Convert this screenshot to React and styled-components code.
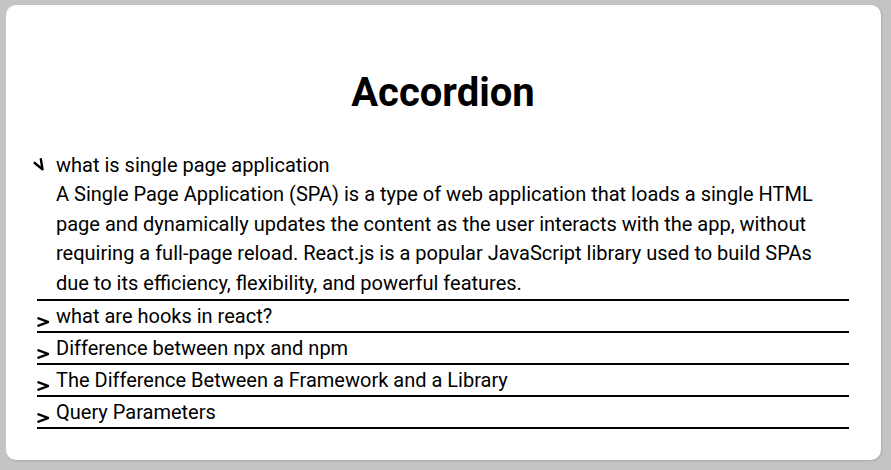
import React, { useState } from "react";
import styled, { createGlobalStyle } from "styled-components";

const GlobalStyle = createGlobalStyle`
  html, body {
    margin: 0;
    padding: 0;
  }
  body {
    background: #c4c4c4;
    font-family: Roboto, "Liberation Sans", Arial, sans-serif;
    color: #000;
  }
`;

const Page = styled.div`
  padding: 5px 10px 10px 6px;
`;

const Card = styled.div`
  height: 455px;
  background: #fff;
  border-radius: 10px;
  box-shadow: 1px 1px 2px rgba(0, 0, 0, 0.12);
  padding: 64px 32px 0 31px;
  box-sizing: border-box;
`;

const Title = styled.h1`
  margin: 0;
  font-size: 40px;
  font-weight: 700;
  line-height: normal;
  text-align: center;
`;

const List = styled.div`
  margin-top: 34px;
`;

const Item = styled.div`
  border-bottom: 2px solid #000;
`;

const Header = styled.div`
  display: flex;
  align-items: flex-start;
  height: 30px;
  cursor: pointer;
`;

const Chevron = styled.svg`
  flex-shrink: 0;
  width: 12px;
  height: 10px;
  margin-top: 16px;
  margin-right: 7px;
  transform: ${props =>
    props.$open ? "translate(-3px, -6px) rotate(60deg)" : "none"};
`;

const Question = styled.span`
  font-size: 20px;
  line-height: 30px;
`;

const Answer = styled.p`
  margin: 0;
  padding: 0 20px 0 19px;
  font-size: 20px;
  line-height: 29.7px;
`;

const faqs = [
  {
    question: "what is single page application",
    answer:
      "A Single Page Application (SPA) is a type of web application that loads a single HTML page and dynamically updates the content as the user interacts with the app, without requiring a full-page reload. React.js is a popular JavaScript library used to build SPAs due to its efficiency, flexibility, and powerful features."
  },
  {
    question: "what are hooks in react?",
    answer:
      "Hooks are functions that let you use state and other React features inside function components."
  },
  {
    question: "Difference between npx and npm",
    answer:
      "npm installs and manages packages, while npx runs a package binary without installing it globally."
  },
  {
    question: "The Difference Between a Framework and a Library",
    answer:
      "You call a library from your code, while a framework calls your code and sets the overall structure."
  },
  {
    question: "Query Parameters",
    answer:
      "Query parameters are key-value pairs added to the end of a URL after a question mark."
  }
];

const AccordionItem = ({ item, open, onToggle }) => (
  <Item>
    <Header onClick={onToggle}>
      <Chevron $open={open} viewBox="0 0 12 10">
        <polyline
          points="0.5,1 11,5 0.5,9"
          fill="none"
          stroke="#000"
          strokeWidth="2.4"
        />
      </Chevron>
      <Question>{item.question}</Question>
    </Header>
    {open && <Answer>{item.answer}</Answer>}
  </Item>
);

const App = () => {
  const [openIndex, setOpenIndex] = useState(0);

  return (
    <Page>
      <GlobalStyle />
      <Card>
        <Title>Accordion</Title>
        <List>
          {faqs.map((item, i) => (
            <AccordionItem
              key={item.question}
              item={item}
              open={openIndex === i}
              onToggle={() => setOpenIndex(openIndex === i ? null : i)}
            />
          ))}
        </List>
      </Card>
    </Page>
  );
};

export default App;
